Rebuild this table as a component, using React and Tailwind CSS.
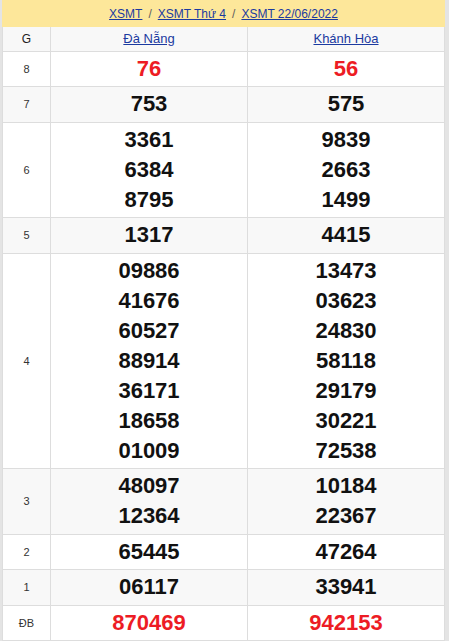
import React from 'react';

const rows = [
  { g: '8', a: ['76'], b: ['56'], red: true },
  { g: '7', a: ['753'], b: ['575'] },
  { g: '6', a: ['3361', '6384', '8795'], b: ['9839', '2663', '1499'] },
  { g: '5', a: ['1317'], b: ['4415'] },
  {
    g: '4',
    a: ['09886', '41676', '60527', '88914', '36171', '18658', '01009'],
    b: ['13473', '03623', '24830', '58118', '29179', '30221', '72538'],
  },
  { g: '3', a: ['48097', '12364'], b: ['10184', '22367'] },
  { g: '2', a: ['65445'], b: ['47264'] },
  { g: '1', a: ['06117'], b: ['33941'] },
  { g: 'ĐB', a: ['870469'], b: ['942153'], red: true },
];

const Cell = ({ nums, red }) => (
  <td className="border border-[#dddddd] text-center py-[2.25px]">
    {nums.map((n) => (
      <div
        key={n}
        className={`text-[22px] font-bold leading-[30px] ${red ? 'text-[#ed1c24]' : 'text-[#111]'}`}
      >
        {n}
      </div>
    ))}
  </td>
);

export default function App() {
  return (
    <div
      className="w-[449px] h-[641px] overflow-hidden bg-[#e4e4e4] pl-[2px] pr-[4px]"
      style={{ fontFamily: '"Liberation Sans", Arial, sans-serif' }}
    >
      <div className="bg-white">
        {/* breadcrumb */}
        <div className="bg-[#fde79a] h-[27px] flex items-center justify-center text-[12px] text-[#5d5d5d] gap-[6px]">
          <a className="text-[#1b3aa0] underline">XSMT</a>
          <span>/</span>
          <a className="text-[#1b3aa0] underline">XSMT Thứ 4</a>
          <span>/</span>
          <a className="text-[#1b3aa0] underline">XSMT 22/06/2022</a>
        </div>
        <table className="w-full border-collapse table-fixed">
          <colgroup>
            <col className="w-[48px]" />
            <col />
            <col />
          </colgroup>
          <thead>
            <tr className="bg-[#f8f8f8] h-[24px]">
              <th className="border border-[#dddddd] border-t-0 text-[12px] font-normal text-[#222]">G</th>
              <th className="border border-[#dddddd] border-t-0 text-[13px] font-normal">
                <a className="text-[#1b3aa0] underline">Đà Nẵng</a>
              </th>
              <th className="border border-[#dddddd] border-t-0 text-[13px] font-normal">
                <a className="text-[#1b3aa0] underline">Khánh Hòa</a>
              </th>
            </tr>
          </thead>
          <tbody>
            {rows.map((r, i) => (
              <tr key={r.g} className={i % 2 === 1 ? 'bg-[#f8f8f8]' : 'bg-white'}>
                <td className="border border-[#dddddd] text-center text-[11px] text-[#333]">{r.g}</td>
                <Cell nums={r.a} red={r.red} />
                <Cell nums={r.b} red={r.red} />
              </tr>
            ))}
          </tbody>
        </table>
      </div>
    </div>
  );
}
